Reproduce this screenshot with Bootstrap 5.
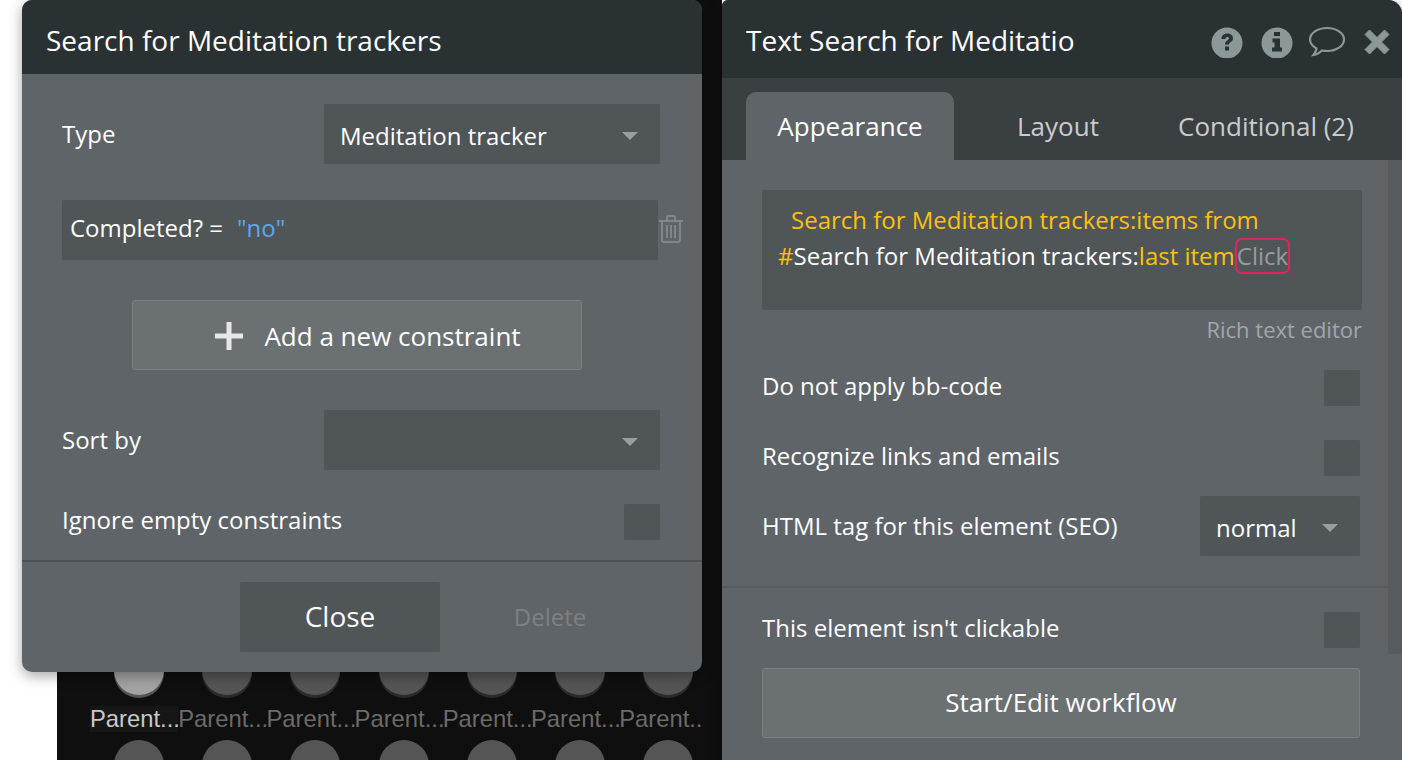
<!DOCTYPE html>
<html lang="en">
<head>
  <meta charset="UTF-8">
  <meta name="viewport" content="width=device-width, initial-scale=1">
  <title>Text Search for Meditatio</title>
  <link href="https://cdn.jsdelivr.net/npm/bootstrap@5.3.3/dist/css/bootstrap.min.css" rel="stylesheet">
  <style>
    body {
      background-color: #fff;
      font-family: "Open Sans", "Liberation Sans", sans-serif;
      font-size: 24px;
      color: #fff;
      overflow: hidden;
    }
    .stage { position: relative; width: 1402px; height: 760px; overflow: hidden; }

    /* canvas behind the two windows */
    .canvas-bg {
      position: absolute; left: 57px; top: 0; width: 665px; height: 760px;
      background-color: #0f0f0f;
      padding-top: 645px;
      font-family: "Liberation Sans", sans-serif;
      font-size: 23.8px;
      color: #6b6b6b;
    }
    .dot-grid { display: grid; grid-template-columns: repeat(7, 88.2px); padding-left: 33px; width: 646px; height: 115px; overflow: hidden; }
    .dot-cell { height: 95px; width: 88.2px; }
    .dot {
      width: 50px; height: 50px; border-radius: 50%; margin-left: 24px;
      background-color: #555;
      box-shadow: 0 3px 0 #2b2b2b;
    }
    .dot-on { background-color: #a3a3a3; box-shadow: 0 3px 0 #555; }
    .dot-label { margin-top: 11px; line-height: 26px; white-space: nowrap; width: 88.2px; }
    .dot-label-on { color: #c9c9c9; background-color: #161616; }

    /* windows */
    .win { position: absolute; top: 0; background-color: #5f6468; box-shadow: 0 4px 14px rgba(0,0,0,.35); }
    .win-left { left: 22px; width: 680px; height: 672px; border-radius: 10px; overflow: hidden; }
    .win-right { left: 722px; width: 680px; height: 760px; border-top-right-radius: 14px; border-top-left-radius: 6px; overflow: hidden; }
    .win-head { background-color: #2a3133; font-size: 28px; padding-left: 24px; }
    .win-left .win-head { height: 74px; padding-top: 6px; }
    .win-right .win-head { height: 78px; padding-top: 6px; }
    .win-title { line-height: 68px; }

    .head-icons { position: absolute; right: 12px; top: 25px; }
    .head-icons svg { display: block; }
    .icon-info { margin-left: 17px; }
    .icon-chat { margin-left: 14px; }
    .icon-close { margin-left: 18px; }

    .tab-strip { background-color: #3a3f42; height: 82px; padding: 14px 0 0 24px; }
    .tab-item {
      width: 208px; height: 68px; line-height: 68px; text-align: center;
      font-size: 26px; color: #c9cccd; border-radius: 10px 10px 0 0;
    }
    .tab-active { background-color: #5f6468; color: #fff; }

    .dark-box { background-color: #505557; border-radius: 2px; }
    .pick { height: 60px; padding: 4px 22px 0 16px; }
    .pick-wide { width: 336px; }
    .pick-small { width: 160px; }
    .caret-down { width: 0; height: 0; border-left: 8px solid transparent; border-right: 8px solid transparent; border-top: 8px solid #9a9ea0; }
    .tick { width: 36px; height: 36px; }
    .text-up { padding-bottom: 4px; }

    .form-left { padding: 30px 42px 0 40px; }
    .row-type { height: 60px; }
    .rule-row { margin-top: 36px; height: 60px; }
    .rule-box { width: 596px; height: 60px; padding: 0 0 5px 8px; }
    .rule-val { color: #5aa9f0; margin-left: 14px; }
    .trash { position: absolute; left: 637px; top: 215px; }
    .soft-btn {
      background-color: #6b7073; border: 1px solid #7b8083; border-radius: 3px;
      color: #fff; font-size: 26px; height: 70px;
    }
    .add-btn { width: 450px; margin: 40px 0 40px 70px; padding: 2px 0 0 20px; }
    .add-btn svg { margin-left: 2px; margin-right: -3px; }
    .row-ignore { height: 36px; margin-top: 34px; }
    .rule-line { height: 2px; margin-top: 20px; background-color: #4d5153; }
    .left-foot { padding: 20px 0 0 218px; }
    .close-btn { width: 200px; height: 70px; font-size: 28px; color: #fff; padding-bottom: 8px; }
    .delete-txt { width: 220px; text-align: center; color: #7d8184; }

    .pane { position: relative; height: 600px; }
    .scroll-bar { position: absolute; right: 0; top: 0; width: 14px; height: 494px; background-color: #575b5e; }
    .form-right { padding: 30px 42px 0 40px; }
    .rich-box { width: 600px; height: 120px; padding: 12px 16px; line-height: 36px; }
    .gold { color: #fcc10f; }
    .gold-first { padding-left: 13px; }
    .click-tag {
      display: inline-block; color: #989c9e; line-height: 31px; height: 36px; vertical-align: top; margin-top: 0;
      border: 2px solid #e0245e; border-radius: 7px; padding: 0;
    }
    .rich-note { width: 600px; text-align: right; color: #a2a6a8; font-size: 22px; line-height: 30px; height: 31px; margin-top: 4px; }
    .opt-row { width: 598px; height: 36px; margin-top: 25px; }
    .opt-second { margin-top: 34px; }
    .row-seo { width: 598px; height: 60px; margin-top: 20px; }
    .pane-line { height: 2px; width: 666px; margin: 30px 0 0 -40px; background-color: #575b5e; }
    .opt-last { margin-top: 24px; }
    .flow-btn { width: 598px; margin-top: 20px; display: block; padding-bottom: 8px; }
  </style>
</head>
<body>
  <div class="stage">
    <!-- canvas behind the windows -->
    <div class="canvas-bg">
      <div class="dot-grid" id="dots"></div>
    </div>

    <!-- left window -->
    <div class="win win-left">
      <div class="win-head"><div class="win-title">Search for Meditation trackers</div></div>
      <div class="form-left">
        <div class="d-flex justify-content-between align-items-center row-type">
          <span>Type</span>
          <div class="dark-box pick pick-wide d-flex justify-content-between align-items-center">
            <span>Meditation tracker</span><span class="caret-down"></span>
          </div>
        </div>
        <div class="rule-row">
          <div class="dark-box rule-box d-flex align-items-center">
            <span>Completed? =</span><span class="rule-val">"no"</span>
          </div>
        </div>
        <button type="button" class="btn soft-btn add-btn d-flex justify-content-center align-items-center gap-4">
          <svg width="28" height="28" viewBox="0 0 28 28"><path d="M11.5 0h5v11.5H28v5H16.5V28h-5V16.5H0v-5h11.5z" fill="#e6e7e8"/></svg>
          <span>Add a new constraint</span>
        </button>
        <div class="d-flex justify-content-between align-items-center row-type">
          <span>Sort by</span>
          <div class="dark-box pick pick-wide d-flex justify-content-end align-items-center">
            <span class="caret-down"></span>
          </div>
        </div>
        <div class="d-flex justify-content-between align-items-center row-ignore">
          <span class="text-up">Ignore empty constraints</span>
          <div class="dark-box tick"></div>
        </div>
      </div>
      <div class="rule-line"></div>
      <div class="left-foot d-flex align-items-center">
        <button type="button" class="btn dark-box close-btn">Close</button>
        <div class="delete-txt">Delete</div>
      </div>
      <svg class="trash" width="24" height="28" viewBox="0 0 24 28" fill="none" stroke="#80868a" stroke-width="2">
        <path d="M0 6h24M8 5V2.500Q8 1 9.500 1h5Q16 1 16 2.500V5M3 6v19q0 2 2 2h14q2 0 2-2V6M8 10v13M12 10v13M16 10v13"/>
      </svg>
    </div>

    <!-- right window -->
    <div class="win win-right">
      <div class="win-head"><div class="win-title">Text Search for Meditatio</div></div>
      <div class="head-icons d-flex align-items-center">
        <svg width="32" height="32" viewBox="0 0 32 32"><circle cx="16" cy="17" r="15.500" fill="#8b9799"/><path d="M10.500 13c0-4 3-5.500 5.800-5.500 3.200 0 5.700 1.800 5.700 4.800 0 3.700-4 3.700-4 6.200h-4c0-4 4-4.300 4-6 0-1-.8-1.500-1.800-1.500-1.100 0-1.800.7-1.900 2zM14 20.500h4v4h-4z" fill="#2a3133"/></svg>
        <svg class="icon-info" width="34" height="32" viewBox="0 0 34 32"><circle cx="17" cy="17" r="15.500" fill="#8b9799"/><path d="M14 6h6v4h-6zM12.500 12.500H20v9h2v4H12v-4h2.500v-5h-2z" fill="#2a3133"/></svg>
        <svg class="icon-chat" width="38" height="34" viewBox="0 0 38 34" fill="none" stroke="#8b9799" stroke-width="2.200"><path d="M19 3C9.500 3 2 8 2 14.500c0 4 3 7 6.500 9-.3 2-1.300 4.500-3 6.500 3.500-.5 6.500-2.500 8.500-4.500 1.600.3 3.300.5 5 .5 9.500 0 17-5 17-11.500S28.500 3 19 3z"/></svg>
        <svg class="icon-close" width="26" height="26" viewBox="0 0 26 26"><path d="M5.500 1 13 8.500 20.500 1 25 5.500 17.500 13 25 20.500 20.500 25 13 17.500 5.500 25 1 20.500 8.500 13 1 5.500z" fill="#8b9799" stroke="#8b9799" stroke-linejoin="round"/></svg>
      </div>
      <div class="tab-strip d-flex">
        <div class="tab-item tab-active">Appearance</div>
        <div class="tab-item">Layout</div>
        <div class="tab-item">Conditional (2)</div>
      </div>
      <div class="pane">
        <div class="scroll-bar"></div>
        <div class="form-right">
          <div class="dark-box rich-box">
            <div class="gold gold-first">Search for Meditation trackers:items from</div>
            <div><span class="gold">#</span>Search for Meditation trackers:<span class="gold">last item</span><span class="click-tag">Click</span></div>
          </div>
          <div class="rich-note">Rich text editor</div>
          <div class="opt-row d-flex justify-content-between align-items-center">
            <span class="text-up">Do not apply bb-code</span><div class="dark-box tick"></div>
          </div>
          <div class="opt-row opt-second d-flex justify-content-between align-items-center">
            <span class="text-up">Recognize links and emails</span><div class="dark-box tick"></div>
          </div>
          <div class="row-seo d-flex justify-content-between align-items-center">
            <span>HTML tag for this element (SEO)</span>
            <div class="dark-box pick pick-small d-flex justify-content-between align-items-center">
              <span>normal</span><span class="caret-down"></span>
            </div>
          </div>
          <div class="pane-line"></div>
          <div class="opt-row opt-last d-flex justify-content-between align-items-center">
            <span class="text-up">This element isn't clickable</span><div class="dark-box tick"></div>
          </div>
          <button type="button" class="btn soft-btn flow-btn">Start/Edit workflow</button>
        </div>
      </div>
    </div>
  </div>

  <script>
    // two rows of the repeating group on the canvas, only the first row's labels are in frame
    const dots = document.getElementById("dots");
    for (let i = 0; i < 14; i++) {
      const on = i === 0;
      const cell = document.createElement("div");
      cell.className = "dot-cell";
      cell.innerHTML = `<div class="dot ${on ? "dot-on" : ""}"></div>` +
        (i < 7 ? `<div class="dot-label ${on ? "dot-label-on" : ""}">Parent...</div>` : "");
      dots.appendChild(cell);
    }
  </script>
  <script src="https://cdn.jsdelivr.net/npm/bootstrap@5.3.3/dist/js/bootstrap.bundle.min.js"></script>
</body>
</html>
